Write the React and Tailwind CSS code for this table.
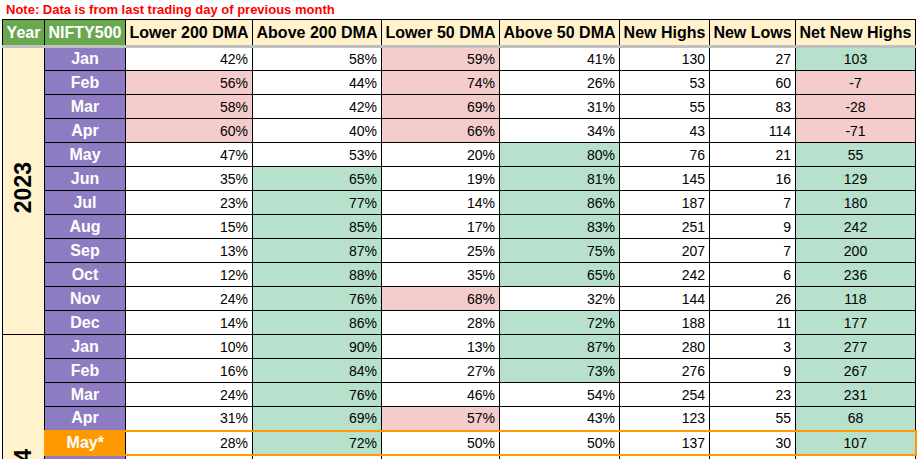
import React from 'react';

const G = 'g';
const P = 'p';

// [month, l200, a200, l50, a50, highs, lows, net, colors for l200/a200/l50/a50/net]
const rows2023 = [
  ['Jan', 42, 58, 59, 41, 130, 27, 103, ['', '', P, '', G]],
  ['Feb', 56, 44, 74, 26, 53, 60, -7, [P, '', P, '', P]],
  ['Mar', 58, 42, 69, 31, 55, 83, -28, [P, '', P, '', P]],
  ['Apr', 60, 40, 66, 34, 43, 114, -71, [P, '', P, '', P]],
  ['May', 47, 53, 20, 80, 76, 21, 55, ['', '', '', G, G]],
  ['Jun', 35, 65, 19, 81, 145, 16, 129, ['', G, '', G, G]],
  ['Jul', 23, 77, 14, 86, 187, 7, 180, ['', G, '', G, G]],
  ['Aug', 15, 85, 17, 83, 251, 9, 242, ['', G, '', G, G]],
  ['Sep', 13, 87, 25, 75, 207, 7, 200, ['', G, '', G, G]],
  ['Oct', 12, 88, 35, 65, 242, 6, 236, ['', G, '', G, G]],
  ['Nov', 24, 76, 68, 32, 144, 26, 118, ['', G, P, '', G]],
  ['Dec', 14, 86, 28, 72, 188, 11, 177, ['', G, '', G, G]],
];

const rows2024 = [
  ['Jan', 10, 90, 13, 87, 280, 3, 277, ['', G, '', G, G]],
  ['Feb', 16, 84, 27, 73, 276, 9, 267, ['', G, '', G, G]],
  ['Mar', 24, 76, 46, 54, 254, 23, 231, ['', G, '', '', G]],
  ['Apr', 31, 69, 57, 43, 123, 55, 68, ['', G, P, '', G]],
  ['May*', 28, 72, 50, 50, 137, 30, 107, ['', G, '', '', G]],
  ['Jun'], ['Jul'], ['Aug'], ['Sep'], ['Oct'], ['Nov'], ['Dec'],
];

function bg(c) {
  if (c === G) return 'bg-[#b7e1cd]';
  if (c === P) return 'bg-[#f4cccc]';
  return 'bg-white';
}

function Row({ r, yearCell }) {
  const [month, l200, a200, l50, a50, hi, lo, net, c] = r;
  const cur = month === 'May*';
  const empty = l200 === undefined;
  const cols = c || ['', '', '', '', ''];
  // current month row gets an orange outline, inner vertical lines stay black
  const edge = cur
    ? 'border-x border-x-black border-y-2 border-y-[#ff9900]'
    : 'border border-black';
  const num = `${edge} px-[4px] py-0 text-right text-[14px] leading-[16px] text-black`;
  const monthCls = cur
    ? 'border-y-2 border-l-2 border-r border-y-[#ff9900] border-l-[#ff9900] border-r-black bg-[#ff9900]'
    : 'border border-black bg-[#8e7cc3]';
  const netCls = cur
    ? 'border-y-2 border-r-2 border-l border-y-[#ff9900] border-r-[#ff9900] border-l-black'
    : 'border border-black';
  return (
    <tr className="h-[24px]">
      {yearCell}
      <td className={`${monthCls} p-0 text-center text-[16px] font-bold leading-[18px] text-white`}>
        {empty ? '' : month}
      </td>
      <td className={`${num} ${bg(cols[0])}`}>{empty ? '' : `${l200}%`}</td>
      <td className={`${num} ${bg(cols[1])}`}>{empty ? '' : `${a200}%`}</td>
      <td className={`${num} ${bg(cols[2])}`}>{empty ? '' : `${l50}%`}</td>
      <td className={`${num} ${bg(cols[3])}`}>{empty ? '' : `${a50}%`}</td>
      <td className={`${num} bg-white`}>{empty ? '' : hi}</td>
      <td className={`${num} bg-white ${lo === 11 ? 'text-[#990000]' : ''}`}>{empty ? '' : lo}</td>
      <td className={`${netCls} p-0 text-center text-[14px] leading-[16px] text-black ${bg(empty ? '' : cols[4])}`}>
        {empty ? '' : net}
      </td>
    </tr>
  );
}

function YearCell({ year, span }) {
  return (
    <td rowSpan={span} className="border border-black bg-[#fff2cc] p-0 text-center align-middle">
      <span className="inline-block rotate-180 text-[23px] font-bold leading-none text-black [writing-mode:vertical-rl]">
        {year}
      </span>
    </td>
  );
}

export default function App() {
  const headers = ['Lower 200 DMA', 'Above 200 DMA', 'Lower 50 DMA', 'Above 50 DMA', 'New Highs', 'New Lows', 'Net New Highs'];
  const hc = 'border border-black border-b-[3px] border-b-[#c0c0c0] p-0 text-[16px] font-bold leading-[18px]';
  return (
    <div className="h-[459px] w-[917px] overflow-hidden bg-white font-['Liberation_Sans',Arial,sans-serif]">
      <div className="h-[19px] pl-[6px] pt-[1px] text-[13px] font-bold leading-[17px] text-[#ff0000]">
        Note: Data is from last trading day of previous month
      </div>
      <table className="ml-[2px] table-fixed border-collapse">
        <colgroup>
          <col className="w-[42px]" />
          <col className="w-[81px]" />
          <col className="w-[127px]" />
          <col className="w-[129px]" />
          <col className="w-[118px]" />
          <col className="w-[120px]" />
          <col className="w-[90px]" />
          <col className="w-[86px]" />
          <col className="w-[120px]" />
        </colgroup>
        <thead>
          <tr className="h-[27px]">
            <th className={`${hc} bg-[#6aa84f] text-white`}>Year</th>
            <th className={`${hc} bg-[#6aa84f] text-white`}>NIFTY500</th>
            {headers.map((h) => (
              <th key={h} className={`${hc} whitespace-nowrap bg-[#fff2cc] text-black`}>
                {h}
              </th>
            ))}
          </tr>
        </thead>
        <tbody>
          {rows2023.map((r, i) => (
            <Row key={'a' + i} r={r} yearCell={i === 0 ? <YearCell year="2023" span={12} /> : null} />
          ))}
          {rows2024.map((r, i) => (
            <Row key={'b' + i} r={r} yearCell={i === 0 ? <YearCell year="2024" span={12} /> : null} />
          ))}
        </tbody>
      </table>
    </div>
  );
}
